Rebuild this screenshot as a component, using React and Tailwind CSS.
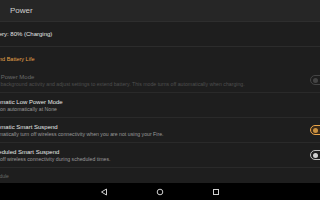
import React from "react";

const Toggle = ({ on, dim }) => (
  <div
    className={`w-[22px] h-[10px] rounded-full border flex items-center px-[2px] ${
      on ? "border-[#e8a44a] bg-[#3a2a18]" : dim ? "border-[#444]" : "border-[#bdbdbd]"
    }`}
  >
    <div className={`w-[5px] h-[5px] rounded-full ${on ? "bg-[#c89040]" : dim ? "bg-[#444]" : "bg-[#d0d0d0]"}`} />
  </div>
);

const Row = ({ title, sub, toggle, dim, on }) => (
  <div className="flex items-center justify-between h-[25px] border-b border-[#2a2a2a]">
    <div className="flex flex-col leading-none pt-[1px]">
      <span className={`text-[6px] ${dim ? "text-[#6a6a6a]" : "text-[#e6e6e6]"}`}>{title}</span>
      <span className={`text-[5.2px] mt-[2px] ${dim ? "text-[#4f4f4f]" : "text-[#9a9a9a]"}`}>{sub}</span>
    </div>
    {toggle && (
      <div className="mr-[-12px]">
        <Toggle on={on} dim={dim} />
      </div>
    )}
  </div>
);

export default function App() {
  return (
    <div className="w-[320px] h-[200px] overflow-hidden bg-[#1e1e1e] flex flex-col" style={{ fontFamily: "'Liberation Sans', Arial, sans-serif" }}>
      <div className="h-[22px] bg-[#262626] flex items-center pl-[10px] border-b border-[#2e2e2e] shrink-0">
        <span className="text-[8px] text-[#cfcfcf]">Power</span>
      </div>
      <div className="flex-1 ml-[-12px] flex flex-col">
        <div className="h-[25px] flex items-center pt-[1px] border-b border-[#2c2c2c]">
          <span className="text-[6px] text-[#e6e6e6]">Battery: 80% (Charging)</span>
        </div>
        <div className="h-[21px] flex items-end pb-[5px]">
          <span className="text-[5.5px] text-[#e8a44a]">Extend Battery Life</span>
        </div>
        <Row
          dim
          toggle
          title="Low Power Mode"
          sub="Limit background activity and adjust settings to extend battery. This mode turns off automatically when charging."
        />
        <Row title="Automatic Low Power Mode" sub="Turn on automatically at None" />
        <Row
          toggle
          on
          title="Automatic Smart Suspend"
          sub="Automatically turn off wireless connectivity when you are not using your Fire."
        />
        <Row
          toggle
          title="Scheduled Smart Suspend"
          sub="Turn off wireless connectivity during scheduled times."
        />
        <div className="flex-1 flex items-center pt-[3px]">
          <span className="text-[5px] text-[#6a6a6a]">Schedule</span>
        </div>
      </div>
      <div className="h-[17px] bg-black flex items-center justify-center gap-[48px] shrink-0">
        <svg width="8" height="8" viewBox="0 0 8 8">
          <path d="M6.5 1 L1.5 4 L6.5 7 Z" fill="none" stroke="#d0d0d0" strokeWidth="1" />
        </svg>
        <svg width="8" height="8" viewBox="0 0 8 8">
          <circle cx="4" cy="4" r="2.8" fill="none" stroke="#d0d0d0" strokeWidth="1" />
        </svg>
        <svg width="8" height="8" viewBox="0 0 8 8">
          <rect x="1.5" y="1.5" width="5" height="5" fill="none" stroke="#d0d0d0" strokeWidth="1" />
        </svg>
      </div>
    </div>
  );
}
